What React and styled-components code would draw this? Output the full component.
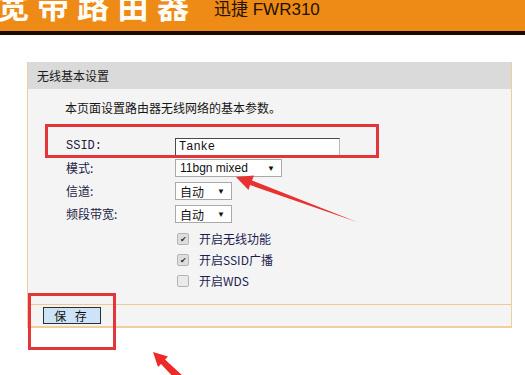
import React from "react";
import styled, { createGlobalStyle } from "styled-components";

const GlobalStyle = createGlobalStyle`
  html, body {
    margin: 0;
    padding: 0;
    background: #ffffff;
  }
  body {
    font-family: "Liberation Sans", "Noto Sans CJK SC", sans-serif;
    font-size: 12px;
    color: #1e1e3c;
  }
`;

const rows = [
  { label: "模式:", value: "11bgn mixed", width: 107 },
  { label: "信道:", value: "自动", width: 57 },
  { label: "频段带宽:", value: "自动", width: 57 },
];

const checks = [
  { label: "开启无线功能", on: true },
  { label: "开启SSID广播", on: true },
  { label: "开启WDS", on: false },
];

const App = () => (
  <Page>
    <GlobalStyle />
    <Header>
      <Brand>宽带路由器</Brand>
      <Model>迅捷 FWR310</Model>
    </Header>
    <Main>
      <Panel>
        <PanelTitle>无线基本设置</PanelTitle>
        <PanelBody>
          <Intro>本页面设置路由器无线网络的基本参数。</Intro>
          <Form>
            <Label $mono>SSID:</Label>
            <TextInput>Tanke</TextInput>
            {rows.map((row) => (
              <React.Fragment key={row.label}>
                <Label>{row.label}</Label>
                <Select $w={row.width}>
                  <span>{row.value}</span>
                  <Caret>▼</Caret>
                </Select>
              </React.Fragment>
            ))}
          </Form>
          <Checks>
            {checks.map((c) => (
              <CheckRow key={c.label}>
                <Box $on={c.on}>{c.on ? "✔" : ""}</Box>
                <span>{c.label}</span>
              </CheckRow>
            ))}
          </Checks>
        </PanelBody>
        <PanelFooter>
          <SaveButton>保 存</SaveButton>
        </PanelFooter>
      </Panel>
    </Main>

    <Mark $x={45} $y={124} $w={334} $h={34} />
    <Mark $x={28} $y={293} $w={88} $h={57} />
    <Arrows width="525" height="375" viewBox="0 0 525 375">
      <polygon
        fill="#e8322f"
        points="236,177 254,175.5 252,180.5 357,222 250,185 248.5,190"
      />
      <polygon
        fill="#ee2a26"
        points="153,352 168,356.5 165,359.5 184,377 177,381 161,364 158,367"
      />
    </Arrows>
  </Page>
);

export default App;

const Page = styled.div`
  position: relative;
  width: 525px;
  height: 375px;
  overflow: hidden;
`;

const Header = styled.div`
  display: flex;
  align-items: flex-start;
  height: 31px;
  background: #ee8a16;
  border-bottom: 4px solid #1c0a02;
  overflow: hidden;
`;

const Brand = styled.div`
  margin: -16px 0 0 -3px;
  font-family: "Noto Sans CJK SC", sans-serif;
  font-size: 32px;
  font-weight: 700;
  line-height: 40px;
  letter-spacing: 8px;
  color: #fffdf6;
  white-space: nowrap;
`;

const Model = styled.div`
  margin: 0 0 0 17px;
  font-family: "Liberation Sans", "Noto Sans CJK SC", sans-serif;
  font-size: 17px;
  line-height: 20px;
  color: #241200;
  white-space: nowrap;
`;

const Main = styled.div`
  width: 485px;
  padding: 27px 0 0 27px;
`;

const Panel = styled.div`
  border: 1px solid #f0cf9f;
  border-top: none;
  background: #f4f4f4;
`;

const PanelTitle = styled.div`
  height: 27px;
  line-height: 27px;
  padding-left: 9px;
  background: #dadada;
  font-family: "Noto Sans CJK SC", sans-serif;
  font-size: 12px;
  color: #1a1a1a;
`;

const PanelBody = styled.div`
  padding: 11px 0 15px 37px;
  border-bottom: 1px solid #edc994;
`;

const Intro = styled.div`
  font-family: "Noto Sans CJK SC", sans-serif;
  line-height: 16px;
  color: #161616;
`;

const Form = styled.div`
  display: grid;
  grid-template-columns: 109px auto;
  justify-content: start;
  align-items: center;
  row-gap: 5px;
  margin-top: 22px;
  padding-left: 1px;
  & > :nth-child(2) {
    margin-bottom: -2px;
  }
`;

const Label = styled.div`
  font-family: ${(p) =>
    p.$mono ? '"Liberation Mono", monospace' : '"Noto Sans CJK SC", sans-serif'};
  font-size: 12px;
  line-height: 16px;
  color: #1c1c44;
`;

const TextInput = styled.div`
  width: 160px;
  height: 16px;
  line-height: 16px;
  padding-left: 3px;
  border: 1px solid #4a4a4a;
  border-right-color: #bbbbbb;
  border-bottom-color: #bbbbbb;
  background: #ffffff;
  font-family: "Liberation Mono", monospace;
  font-size: 12px;
  color: #111;
`;

const Select = styled.div`
  box-sizing: border-box;
  display: flex;
  align-items: center;
  justify-content: space-between;
  width: ${(p) => p.$w}px;
  height: 18px;
  padding: 0 6px 0 4px;
  border: 1px solid #a9a9a9;
  background: #ffffff;
  font-family: "Liberation Sans", "Noto Sans CJK SC", sans-serif;
  font-size: 12px;
  color: #111;
`;

const Caret = styled.span`
  font-size: 8px;
  color: #111;
`;

const Checks = styled.div`
  display: flex;
  flex-direction: column;
  gap: 4px;
  margin: 7px 0 0 112px;
`;

const CheckRow = styled.div`
  display: flex;
  align-items: center;
  gap: 10px;
  height: 17px;
  font-family: "Noto Sans CJK SC", sans-serif;
  color: #1c1c50;
`;

const Box = styled.div`
  box-sizing: border-box;
  width: 12px;
  height: 12px;
  border: 1px solid #b4b4b4;
  border-radius: 2px;
  background: ${(p) => (p.$on ? "#dedede" : "#eaeaea")};
  font-size: 8px;
  line-height: 10px;
  text-align: center;
  color: #333;
`;

const PanelFooter = styled.div`
  display: flex;
  align-items: center;
  height: 21px;
  padding-left: 15px;
  border-bottom: 1px solid #f0cf9f;
`;

const SaveButton = styled.div`
  box-sizing: border-box;
  width: 58px;
  height: 17px;
  line-height: 15px;
  border: 1px solid #2f2f2f;
  background: #cfe3f6;
  font-family: "Noto Sans CJK SC", sans-serif;
  font-size: 12px;
  letter-spacing: 3px;
  text-align: center;
  color: #111;
`;

const Mark = styled.div`
  position: absolute;
  left: ${(p) => p.$x}px;
  top: ${(p) => p.$y}px;
  width: ${(p) => p.$w}px;
  height: ${(p) => p.$h}px;
  box-sizing: border-box;
  border: 3px solid #e2363b;
  pointer-events: none;
`;

const Arrows = styled.svg`
  position: absolute;
  left: 0;
  top: 0;
  pointer-events: none;
`;
